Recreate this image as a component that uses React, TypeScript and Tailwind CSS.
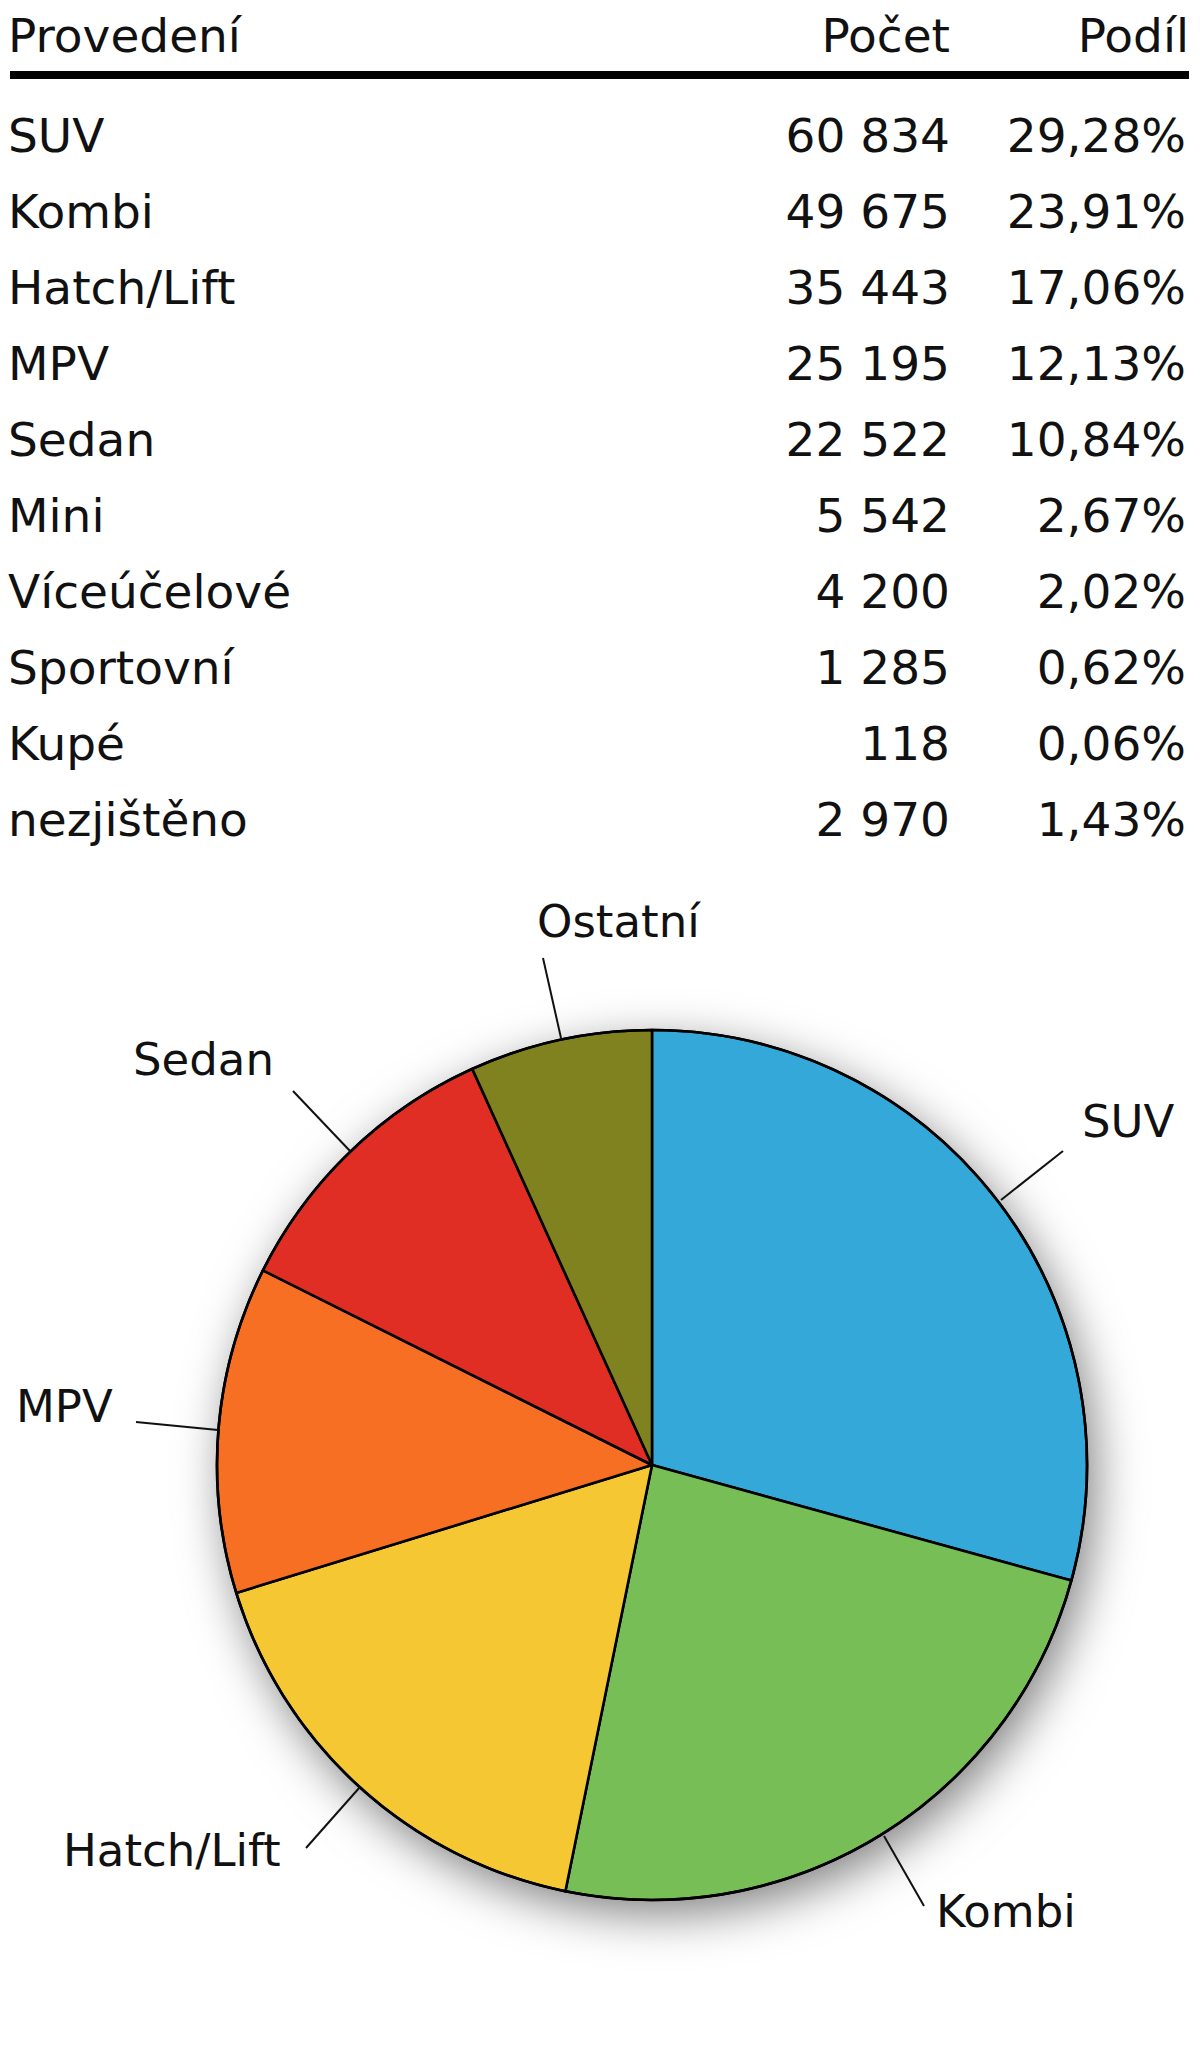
import React from "react";

const rows: [string, string, string][] = [
  ["SUV", "60 834", "29,28%"],
  ["Kombi", "49 675", "23,91%"],
  ["Hatch/Lift", "35 443", "17,06%"],
  ["MPV", "25 195", "12,13%"],
  ["Sedan", "22 522", "10,84%"],
  ["Mini", "5 542", "2,67%"],
  ["Víceúčelové", "4 200", "2,02%"],
  ["Sportovní", "1 285", "0,62%"],
  ["Kupé", "118", "0,06%"],
  ["nezjištěno", "2 970", "1,43%"],
];

const CX = 652;
const CY = 1465;
const R = 435;

const slices: { pct: number; color: string }[] = [
  { pct: 29.28, color: "#34a8d8" },
  { pct: 23.91, color: "#77be56" },
  { pct: 17.06, color: "#f4c733" },
  { pct: 12.13, color: "#f76f22" },
  { pct: 10.84, color: "#e12e25" },
  { pct: 6.78, color: "#80821f" },
];

function pt(deg: number): [number, number] {
  const a = (deg * Math.PI) / 180;
  return [CX + R * Math.sin(a), CY - R * Math.cos(a)];
}

function slicePaths() {
  let start = 0;
  return slices.map((s) => {
    const end = start + s.pct * 3.6;
    const [x1, y1] = pt(start);
    const [x2, y2] = pt(end);
    const large = end - start > 180 ? 1 : 0;
    const d = `M ${CX} ${CY} L ${x1.toFixed(2)} ${y1.toFixed(2)} A ${R} ${R} 0 ${large} 1 ${x2.toFixed(2)} ${y2.toFixed(2)} Z`;
    start = end;
    return { d, color: s.color };
  });
}

const labels: { text: string; x: number; y: number; line: [number, number, number, number] }[] = [
  { text: "Ostatní", x: 537, y: 937, line: [543, 958, 561, 1038] },
  { text: "Sedan", x: 133, y: 1075, line: [293, 1091, 350, 1151] },
  { text: "SUV", x: 1082, y: 1137, line: [1063, 1151, 1001, 1200] },
  { text: "MPV", x: 16, y: 1422, line: [136, 1422, 218, 1430] },
  { text: "Hatch/Lift", x: 63, y: 1866, line: [306, 1848, 360, 1787] },
  { text: "Kombi", x: 936, y: 1927, line: [884, 1836, 924, 1906] },
];

export default function App() {
  const paths = slicePaths();
  return (
    <div className="w-[1200px] h-[2049px] bg-white text-[#111] font-['DejaVu_Sans',Verdana,sans-serif] overflow-hidden">
      <div className="w-[1189px] pl-[8px]">
        <div className="grid grid-cols-[1fr_300px_239px] text-[47px] leading-[71px]">
          <div>Provedení</div>
          <div className="text-right">Počet</div>
          <div className="text-right">Podíl</div>
        </div>
        <div className="ml-[2px] h-[8px] bg-black mb-[19px]" />
        {rows.map(([n, c, p]) => (
          <div key={n} className="grid grid-cols-[1fr_300px_239px] text-[47px] leading-[76px]">
            <div>{n}</div>
            <div className="text-right">{c}</div>
            <div className="text-right pr-[3px]">{p}</div>
          </div>
        ))}
      </div>
      <svg
        width="1200"
        height="1191"
        viewBox="0 858 1200 1191"
        className="block"
      >
        <defs>
          <filter id="sh" x="-30%" y="-30%" width="160%" height="160%">
            <feDropShadow dx="8" dy="14" stdDeviation="24" floodColor="#000" floodOpacity="0.5" />
          </filter>
        </defs>
        <circle cx={CX} cy={CY} r={R} fill="#fff" filter="url(#sh)" />
        {paths.map((p, i) => (
          <path key={i} d={p.d} fill={p.color} stroke="#000" strokeWidth="2.6" strokeLinejoin="round" />
        ))}
        <circle cx={CX} cy={CY} r={R} fill="none" stroke="#000" strokeWidth="2.6" />
        {labels.map((l) => (
          <g key={l.text}>
            <line x1={l.line[0]} y1={l.line[1]} x2={l.line[2]} y2={l.line[3]} stroke="#111" strokeWidth="2" />
            <text x={l.x} y={l.y} fontSize="45" fill="#111" fontFamily="'DejaVu Sans', Verdana, sans-serif">
              {l.text}
            </text>
          </g>
        ))}
      </svg>
    </div>
  );
}
